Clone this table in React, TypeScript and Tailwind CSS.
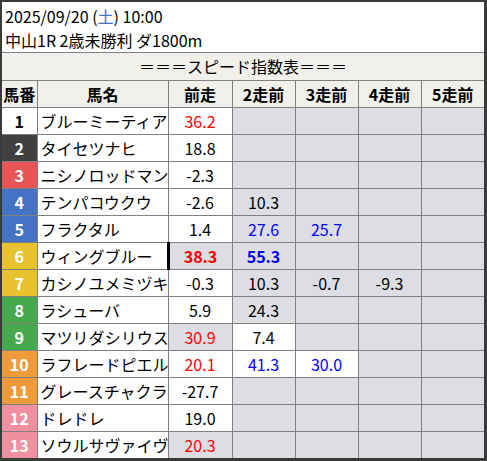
type Cell = { v?: string; c?: 'red' | 'blue' | 'black'; bold?: boolean; white?: boolean; mark?: boolean };

type Horse = { no: number; bg: string; fg: string; name: string; cells: Cell[] };

const horses: Horse[] = [
  { no: 1, bg: 'bg-white', fg: 'text-black', name: 'ブルーミーティア', cells: [{ v: '36.2', c: 'red', white: true }, {}, {}, {}, {}] },
  { no: 2, bg: 'bg-[#404040]', fg: 'text-white', name: 'タイセツナヒ', cells: [{ v: '18.8', white: true }, {}, {}, {}, {}] },
  { no: 3, bg: 'bg-[#e95556]', fg: 'text-white', name: 'ニシノロッドマン', cells: [{ v: '-2.3', white: true }, {}, {}, {}, {}] },
  { no: 4, bg: 'bg-[#4472c4]', fg: 'text-white', name: 'テンパコウクウ', cells: [{ v: '-2.6', white: true }, { v: '10.3' }, {}, {}, {}] },
  { no: 5, bg: 'bg-[#4472c4]', fg: 'text-white', name: 'フラクタル', cells: [{ v: '1.4', white: true }, { v: '27.6', c: 'blue' }, { v: '25.7', c: 'blue' }, {}, {}] },
  { no: 6, bg: 'bg-[#e8c22f]', fg: 'text-white', name: 'ウィングブルー', cells: [{ v: '38.3', c: 'red', bold: true, mark: true }, { v: '55.3', c: 'blue', bold: true }, {}, {}, {}] },
  { no: 7, bg: 'bg-[#e8c22f]', fg: 'text-white', name: 'カシノユメミヅキ', cells: [{ v: '-0.3', white: true }, { v: '10.3' }, { v: '-0.7' }, { v: '-9.3' }, {}] },
  { no: 8, bg: 'bg-[#47a94d]', fg: 'text-white', name: 'ラシューバ', cells: [{ v: '5.9', white: true }, { v: '24.3' }, {}, {}, {}] },
  { no: 9, bg: 'bg-[#47a94d]', fg: 'text-white', name: 'マツリダシリウス', cells: [{ v: '30.9', c: 'red' }, { v: '7.4', white: true }, {}, {}, {}] },
  { no: 10, bg: 'bg-[#ef9a3b]', fg: 'text-white', name: 'ラフレードピエル', cells: [{ v: '20.1', c: 'red', white: true }, { v: '41.3', c: 'blue', white: true }, { v: '30.0', c: 'blue', white: true }, {}, {}] },
  { no: 11, bg: 'bg-[#ef9a3b]', fg: 'text-white', name: 'グレースチャクラ', cells: [{ v: '-27.7', white: true }, {}, {}, {}, {}] },
  { no: 12, bg: 'bg-[#f08fa0]', fg: 'text-white', name: 'ドレドレ', cells: [{ v: '19.0', white: true }, {}, {}, {}, {}] },
  { no: 13, bg: 'bg-[#f08fa0]', fg: 'text-white', name: 'ソウルサヴァイヴ', cells: [{ v: '20.3', c: 'red' }, {}, {}, {}, {}] },
];

const colorClass = { red: 'text-[#ff0000]', blue: 'text-[#0000ff]', black: 'text-black' };

export default function App() {
  return (
    <div
      className="w-[487px] h-[461px] bg-white border-l-2 border-t-2 border-r-[3px] border-b-[3px] border-[#3a3a3a] text-black text-[16px] overflow-hidden"
      style={{ fontFamily: '"Noto Sans CJK JP", "Noto Sans", sans-serif' }}
    >
      <div className="h-[51px] border-b border-[#808080] pl-[3px] pt-[2px] leading-[24px]">
        <div>
          2025/09/20 (<span className="text-[#4472c4]">土</span>) 10:00
        </div>
        <div>中山1R 2歳未勝利 ダ1800m</div>
      </div>
      <table className="table-fixed border-collapse border-hidden w-[482px]">
        <colgroup>
          <col className="w-[35px]" />
          <col className="w-[131px]" />
          <col className="w-[64px]" />
          <col className="w-[63px]" />
          <col className="w-[63px]" />
          <col className="w-[63px]" />
          <col className="w-[63px]" />
        </colgroup>
        <tbody>
          <tr className="h-[27px]">
            <td colSpan={7} className="border border-[#808080] bg-[#f2f0eb] text-center p-0 leading-none">
              ＝＝＝スピード指数表＝＝＝
            </td>
          </tr>
          <tr className="h-[27px] bg-[#f2f0eb] font-bold">
            {['馬番', '馬名', '前走', '2走前', '3走前', '4走前', '5走前'].map((h) => (
              <td key={h} className="border border-[#808080] text-center p-0 leading-none">
                {h}
              </td>
            ))}
          </tr>
          {horses.map((h) => (
            <tr key={h.no} className="h-[27px]">
              <td className={`border border-[#808080] text-center font-bold p-0 leading-none ${h.bg} ${h.fg}`}>{h.no}</td>
              <td className="border border-[#808080] bg-white pl-[3px] p-0 leading-none whitespace-nowrap overflow-hidden">
                {h.name}
              </td>
              {h.cells.map((c, i) => (
                <td
                  key={i}
                  className={`border border-[#808080] text-center p-0 leading-none ${c.white ? 'bg-white' : 'bg-[#dddee3]'} ${
                    colorClass[c.c ?? 'black']
                  } ${c.bold ? 'font-bold' : ''} ${c.mark ? 'border-l-[3px] border-l-black' : ''}`}
                >
                  {c.v ?? ''}
                </td>
              ))}
            </tr>
          ))}
        </tbody>
      </table>
    </div>
  );
}
